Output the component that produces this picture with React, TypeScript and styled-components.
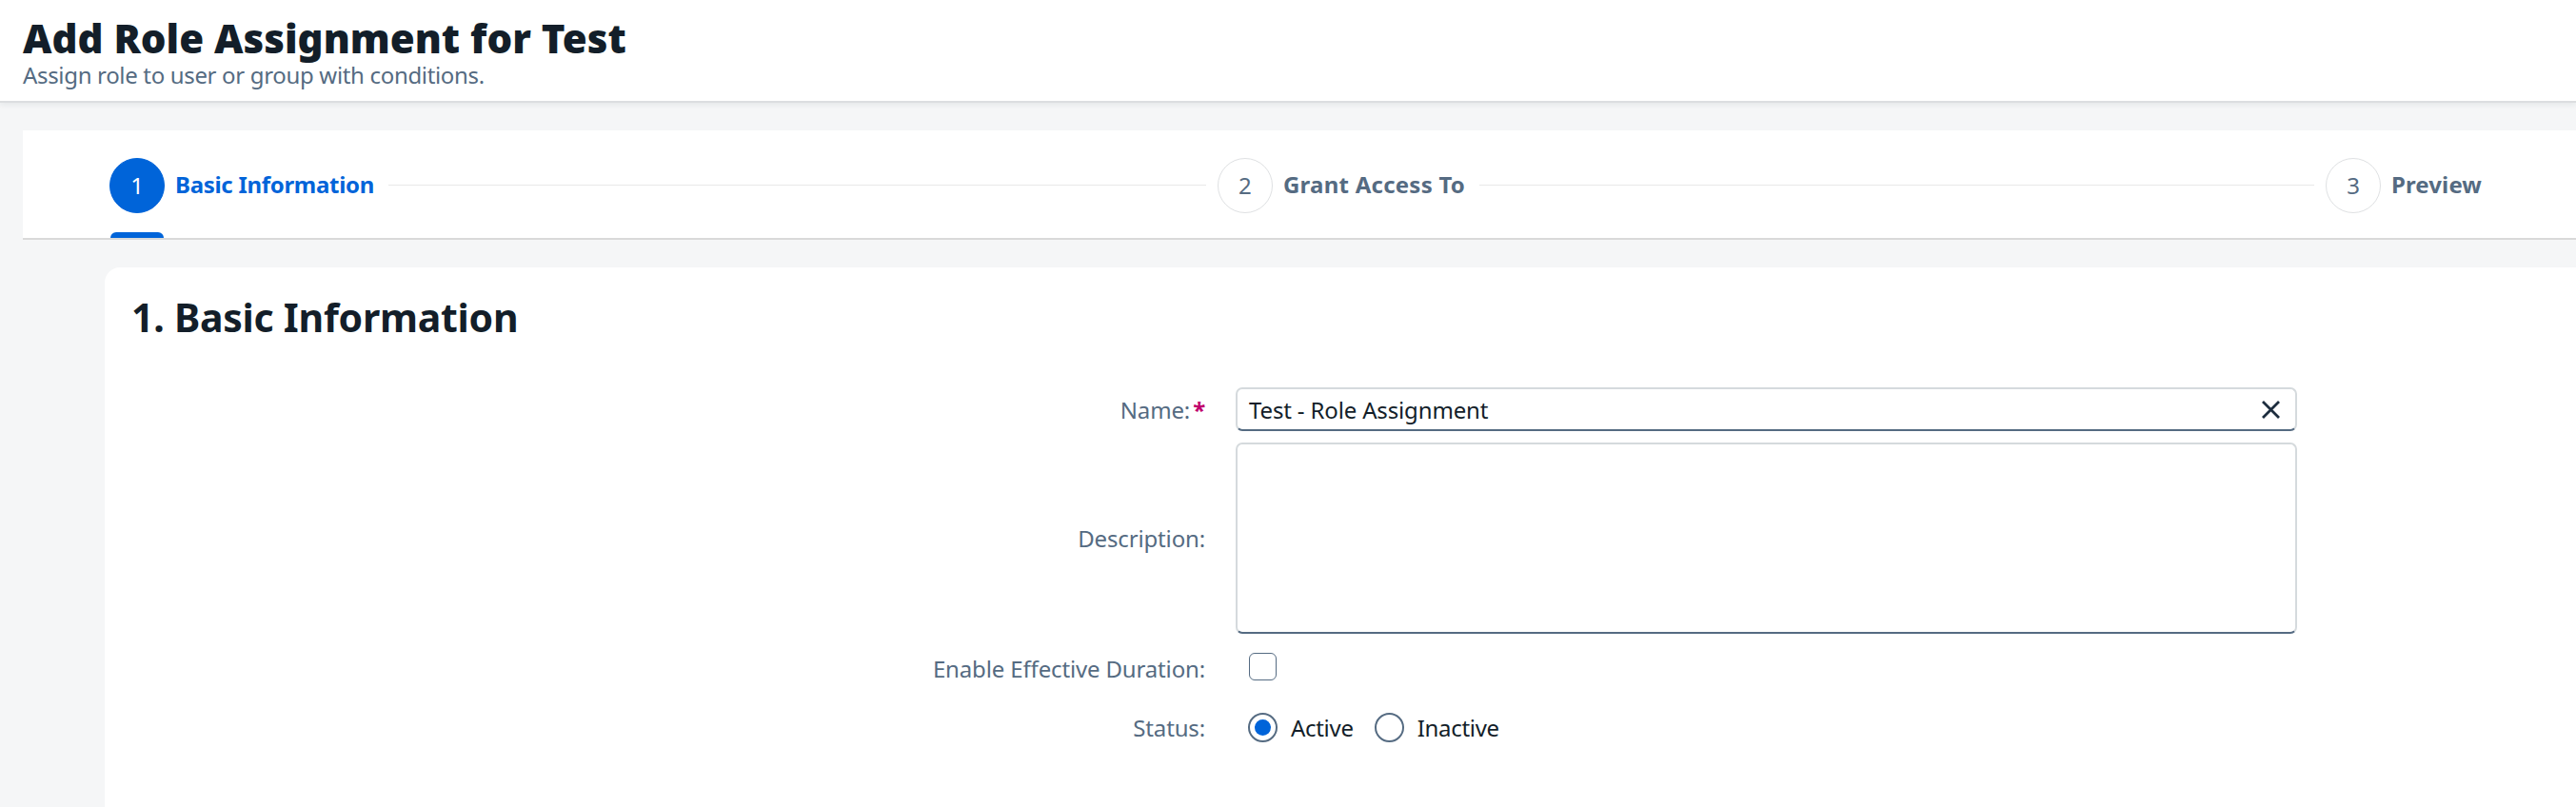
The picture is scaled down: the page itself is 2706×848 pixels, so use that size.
import React from "react";
import styled, { createGlobalStyle } from "styled-components";

const GlobalStyle = createGlobalStyle`
  html, body {
    margin: 0;
    padding: 0;
    height: 100%;
    background: #f5f6f7;
    overflow: hidden;
  }
  * {
    box-sizing: border-box;
  }
  body {
    font-family: "Noto Sans", "Open Sans", sans-serif;
  }
`;

const steps = [
  { number: 1, label: "Basic Information", active: true, tracking: -0.3, grow: 0 },
  { number: 2, label: "Grant Access To", active: false, tracking: 0.25, grow: 859 },
  { number: 3, label: "Preview", active: false, tracking: 0.1, grow: 877 },
];

function App() {
  return (
    <Page>
      <GlobalStyle />
      <Header>
        <Title>Add Role Assignment for Test</Title>
        <Subtitle>Assign role to user or group with conditions.</Subtitle>
      </Header>
      <Stepper>
        {steps.map((step, index) => (
          <React.Fragment key={step.number}>
            {index > 0 && <StepLine $grow={step.grow} />}
            <Step>
              <StepCircle $active={step.active}>{step.number}</StepCircle>
              <StepLabel $active={step.active} $tracking={step.tracking}>
                {step.label}
              </StepLabel>
            </Step>
          </React.Fragment>
        ))}
      </Stepper>
      <Card>
        <CardTitle>1. Basic Information</CardTitle>
        <Form>
          <Label>
            Name:<Required>*</Required>
          </Label>
          <InputField>
            <InputText>Test - Role Assignment</InputText>
            <ClearButton aria-label="Clear">
              <svg width="19" height="19" viewBox="0 0 19 19">
                <path
                  d="M1 1L18 18M18 1L1 18"
                  stroke="#1d2d3e"
                  strokeWidth="2.8"
                  fill="none"
                />
              </svg>
            </ClearButton>
          </InputField>

          <Label>Description:</Label>
          <TextArea />

          <Label>Enable Effective Duration:</Label>
          <CheckRow>
            <Checkbox />
          </CheckRow>

          <Label>Status:</Label>
          <RadioRow>
            <RadioOption>
              <Radio $checked />
              Active
            </RadioOption>
            <RadioOption>
              <Radio />
              Inactive
            </RadioOption>
          </RadioRow>
        </Form>
      </Card>
    </Page>
  );
}

const Page = styled.div`
  height: 100vh;
  overflow: hidden;
  background: #f5f6f7;
`;
const Header = styled.header`
  height: 108px;
  padding: 18px 24px 0;
  background: #fff;
  border-bottom: 2px solid #dcdee0;
  box-shadow: 0 2px 6px rgba(29, 45, 62, 0.08);
`;
const Title = styled.h1`
  margin: 0;
  font-size: 42px;
  line-height: 44px;
  font-weight: 900;
  color: #131e29;
`;
const Subtitle = styled.p`
  margin: 3px 0 0;
  font-size: 24px;
  line-height: 28px;
  letter-spacing: -0.33px;
  color: #556b82;
`;
const Stepper = styled.nav`
  display: flex;
  align-items: center;
  height: 115px;
  margin: 29px 0 0 24px;
  padding: 2px 99px 0 91px;
  background: #fff;
  border-bottom: 2px solid #d9d9d9;
`;
const Step = styled.div`
  display: flex;
  align-items: center;
  gap: 11px;
  flex: none;
`;
const StepCircle = styled.div<{ $active: boolean }>`
  position: relative;
  display: flex;
  align-items: center;
  justify-content: center;
  width: 58px;
  height: 58px;
  border-radius: 50%;
  font-size: 24px;
  background: ${(p) => (p.$active ? "#0064d9" : "#fff")};
  color: ${(p) => (p.$active ? "#fff" : "#556b82")};
  border: 1px solid ${(p) => (p.$active ? "#0064d9" : "#dfe1e3")};

  ${(p) =>
    p.$active &&
    `&::after {
      content: "";
      position: absolute;
      left: 0;
      top: 77px;
      width: 56px;
      height: 6px;
      background: #0064d9;
      border-radius: 6px 6px 0 0;
    }`}
`;
const StepLabel = styled.span<{ $active: boolean; $tracking: number }>`
  padding-bottom: 3px;
  font-size: 24px;
  font-weight: 700;
  white-space: nowrap;
  letter-spacing: ${(p) => p.$tracking}px;
  color: ${(p) => (p.$active ? "#0064d9" : "#556b82")};
`;
const StepLine = styled.div<{ $grow: number }>`
  flex: ${(p) => p.$grow} 1 0;
  height: 1.5px;
  margin: 0 12px 0 15px;
  background: #e8e8e8;
`;
const Card = styled.main`
  height: 700px;
  margin: 29px 0 0 110px;
  padding: 27px 28px;
  background: #fff;
  border-radius: 16px 0 0 0;
`;
const CardTitle = styled.h2`
  margin: 0;
  font-size: 41px;
  line-height: 50px;
  font-weight: 700;
  letter-spacing: -0.25px;
  color: #131e29;
`;
const Form = styled.form`
  display: grid;
  grid-template-columns: 1128px 1115px;
  grid-template-rows: 46px 201px 49px 50px;
  column-gap: 32px;
  row-gap: 12px;
  margin-top: 49px;
`;
const Label = styled.label`
  display: flex;
  align-items: center;
  justify-content: flex-end;
  font-size: 24px;
  letter-spacing: -0.15px;
  color: #556b82;
`;
const Required = styled.span`
  margin-left: 3px;
  color: #c0006c;
  font-weight: 700;
`;
const InputField = styled.div`
  display: flex;
  align-items: center;
  justify-content: space-between;
  padding: 0 16px 0 12px;
  background: #fff;
  border: 2px solid #d5dadd;
  border-bottom-color: #556b82;
  border-radius: 7px;
`;
const InputText = styled.span`
  font-size: 24px;
  letter-spacing: -0.15px;
  color: #131e29;
`;
const ClearButton = styled.span`
  display: flex;
`;
const TextArea = styled.div`
  background: #fff;
  border: 2px solid #d5dadd;
  border-bottom-color: #556b82;
  border-radius: 7px;
`;
const CheckRow = styled.div`
  display: flex;
  align-items: center;
  padding-left: 14px;
`;
const Checkbox = styled.span`
  width: 29px;
  height: 29px;
  margin-bottom: 4px;
  border: 1.5px solid #556b82;
  border-radius: 6px;
  background: #fff;
`;
const RadioRow = styled.div`
  display: flex;
  align-items: center;
  gap: 22px;
  padding-left: 13px;
`;
const RadioOption = styled.div`
  display: flex;
  align-items: center;
  gap: 14px;
  font-size: 24px;
  letter-spacing: -0.3px;
  color: #131e29;
`;
const Radio = styled.span<{ $checked?: boolean }>`
  display: flex;
  align-items: center;
  justify-content: center;
  width: 31px;
  height: 31px;
  border: 2px solid #556b82;
  border-radius: 50%;

  &::after {
    content: "";
    width: 17px;
    height: 17px;
    border-radius: 50%;
    background: ${(p) => (p.$checked ? "#0064d9" : "transparent")};
  }
`;

export default App;
